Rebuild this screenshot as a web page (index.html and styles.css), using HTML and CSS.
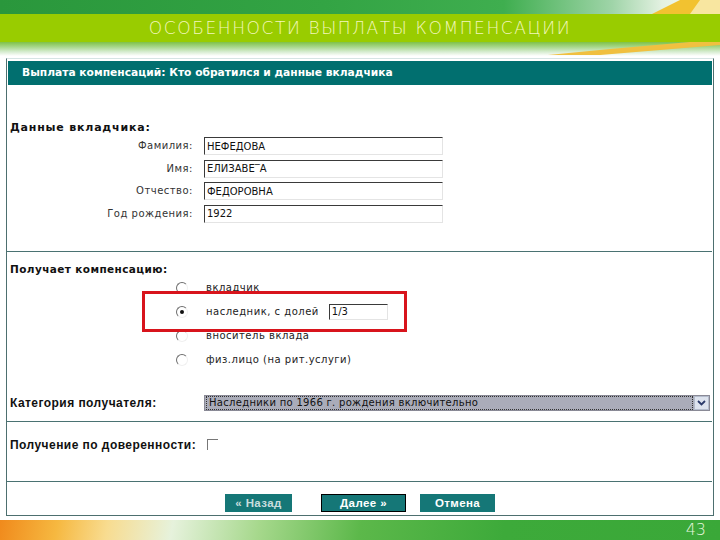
FILE: index.html
```html
<!DOCTYPE html>
<html lang="ru">
<head>
    <meta charset="UTF-8">
    <title>Особенности выплаты компенсации</title>
    <link rel="stylesheet" href="styles.css">
</head>
<body>
    <header class="banner">
        <div class="stripe-top"></div>
        <h1 class="banner-title">ОСОБЕННОСТИ ВЫПЛАТЫ КОМПЕНСАЦИИ</h1>
        <div class="stripe-bottom"></div>
        <svg class="swoosh" viewBox="0 0 720 56" width="720" height="56">
            <polygon points="652,14 680,0 720,0 720,14" fill="#f2c230"/>
            <polygon points="700,0 720,0 720,14 690,14" fill="#f8e6a0"/>
            <polygon points="548,55 610,49 690,42 720,42 720,45 660,50 600,55" fill="#f0c040"/>
        </svg>
    </header>

    <div class="window">
        <div class="window-title">Выплата компенсаций: Кто обратился и данные вкладчика</div>

        <div class="section depositor">
            <div class="heading">Данные вкладчика:</div>
            <div class="fields">
                <label>Фамилия:</label>
                <input class="field" type="text" value="НЕФЕДОВА">
                <label>Имя:</label>
                <input class="field" type="text" value="ЕЛИЗАВЕ&#8254;А">
                <label>Отчество:</label>
                <input class="field" type="text" value="ФЕДОРОВНА">
                <label>Год рождения:</label>
                <input class="field" type="text" value="1922">
            </div>
        </div>

        <div class="section recipient">
            <div class="heading">Получает компенсацию:</div>
            <ul class="choices">
                <li><span class="radio"></span>вкладчик</li>
                <li><span class="radio on"></span>наследник, с долей <input class="share" type="text" value="1/3"></li>
                <li><span class="radio"></span>вноситель вклада</li>
                <li><span class="radio"></span>физ.лицо (на рит.услуги)</li>
            </ul>
            <div class="category">
                <div class="heading2">Категория получателя:</div>
                <div class="select">
                    <span class="select-text">Наследники по 1966 г. рождения включительно</span>
                    <span class="select-arrow">
                        <svg width="9" height="6" viewBox="0 0 9 6"><path d="M1 1l3.5 3.5L8 1" fill="none" stroke="#2b3a6a" stroke-width="1.8"/></svg>
                    </span>
                </div>
            </div>
            <div class="highlight"></div>
        </div>

        <div class="section proxy">
            <div class="heading2">Получение по доверенности:</div>
            <span class="check"></span>
        </div>

        <div class="buttons">
            <div class="btn back">&laquo; Назад</div>
            <div class="btn next">Далее &raquo;</div>
            <div class="btn cancel">Отмена</div>
        </div>
    </div>

    <footer class="footer">
        <span class="page-num">43</span>
    </footer>
</body>
</html>
```

FILE: styles.css
```css
*{
    margin:0;
    padding:0;
    box-sizing:border-box;
    list-style:none;
}
body{
    width:720px;
    height:540px;
    overflow:hidden;
    background:#fff;
    font-family:"DejaVu Sans", sans-serif;
    font-size:10px;
    color:#222;
}

/* banner */
.banner{
    position:relative;
    height:56px;
}
.stripe-top{
    height:14px;
    background:linear-gradient(90deg, #2a973c 0%, #33a444 45%, #3fae4f 70%, #9fd4a8 85%, #e4f1e2 92%, #fff 100%);
}
.banner-title{
    height:28px;
    background:#99cc00;
    text-align:center;
    font-family:"DejaVu Sans", sans-serif;
    font-weight:200;
    font-size:17px;
    line-height:28px;
    color:#f3f7bc;
    letter-spacing:1.6px;
}
.stripe-bottom{
    height:14px;
    background:linear-gradient(180deg, #7fc147 0%, #a7d78a 35%, #d6ecd0 70%, #fff 100%);
}
.swoosh{
    position:absolute;
    top:0;
    left:0;
    pointer-events:none;
}

/* window */
.window{
    margin:2px 6px 0;
    border:1px solid #4d6f6f;
    border-top-color:#d6e4e4;
    background:#fff;
}
.window-title{
    margin:2px 1px 0;
    height:24px;
    padding-left:14px;
    background:#016f6f;
    color:#fff;
    font-family:"DejaVu Sans", sans-serif;
    font-weight:bold;
    font-size:10.7px;
    line-height:24px;
}
.section{
    position:relative;
    margin-right:1px;
    padding:0 2px 0 3px;
    border-bottom:1px solid #4a7272;
}
.heading{
    font-weight:bold;
    font-size:10.5px;
    line-height:14px;
    letter-spacing:0.4px;
    color:#111;
}
.heading2{
    font-family:"Liberation Sans", sans-serif;
    font-weight:bold;
    font-size:12px;
    line-height:14px;
    letter-spacing:0.45px;
    white-space:nowrap;
    color:#111;
}

/* depositor */
.depositor{
    padding-top:36px;
    padding-bottom:28px;
}
.depositor .heading{
    margin-bottom:2px;
    font-size:11px;
    letter-spacing:0.8px;
}
.fields{
    display:grid;
    grid-template-columns:183px 239px;
    column-gap:11px;
    row-gap:4.5px;
}
.fields label{
    text-align:right;
    line-height:18px;
    letter-spacing:0.5px;
    color:#333;
}
.field{
    height:18px;
    padding-left:2px;
    border:1px solid;
    border-color:#3a3a3a #e4e4e4 #e4e4e4 #3a3a3a;
    font-family:"DejaVu Sans", sans-serif;
    font-size:10px;
    color:#111;
    background:#fff;
}

/* recipient */
.recipient{
    padding-top:11px;
    padding-bottom:10px;
}
.recipient .heading{
    line-height:13px;
}
.choices li{
    display:flex;
    align-items:center;
    height:24px;
    padding-left:166px;
    letter-spacing:0.5px;
    color:#222;
}
.radio{
    width:12px;
    height:12px;
    margin-right:18px;
    border-radius:50%;
    border:1.5px solid;
    border-color:#6e6e6e #f0f0f0 #f0f0f0 #6e6e6e;
    display:flex;
    align-items:center;
    justify-content:center;
}
.radio.on::after{
    content:"";
    width:4px;
    height:4px;
    border-radius:50%;
    background:#111;
}
.share{
    width:59px;
    height:16px;
    margin-left:10px;
    padding-left:2px;
    border:1px solid;
    border-color:#3a3a3a #e4e4e4 #e4e4e4 #3a3a3a;
    font-family:"DejaVu Sans", sans-serif;
    font-size:10px;
    color:#111;
}
.category{
    display:grid;
    grid-template-columns:183px 1fr;
    column-gap:11px;
    align-items:center;
    margin-top:23px;
}
.select{
    display:flex;
    align-items:center;
    height:16px;
    border:1px solid #8a8a96;
    background:#aaacb9;
}
.select-text{
    flex:1;
    height:14px;
    margin:0 1px;
    padding-left:2px;
    border:1px dotted #333;
    font-size:10px;
    line-height:12px;
    letter-spacing:0.3px;
    color:#111;
}
.select-arrow{
    width:15px;
    height:14px;
    display:flex;
    align-items:center;
    justify-content:center;
    background:#dde3ee;
    border:1px solid #b4bccc;
}
.highlight{
    position:absolute;
    left:135px;
    top:39px;
    width:265px;
    height:41px;
    border:3px solid #d8141c;
}

/* proxy */
.proxy{
    display:grid;
    grid-template-columns:183px 1fr;
    column-gap:11px;
    align-items:center;
    padding-top:16px;
    padding-bottom:29px;
}
.check{
    width:11px;
    height:11px;
    margin-left:3px;
    border-top:1.5px solid #777;
    border-left:1.5px solid #777;
}

/* buttons */
.buttons{
    display:flex;
    justify-content:center;
    padding:12px 0 3px;
}
.btn{
    height:18px;
    background:#157777;
    color:#fff;
    text-align:center;
    font-family:"Liberation Sans", sans-serif;
    font-weight:bold;
    font-size:11.5px;
    line-height:18px;
    letter-spacing:0.4px;
}
.back{
    width:67px;
    color:#c9dede;
}
.next{
    width:85px;
    margin:0 14px 0 29px;
    border:1px solid #000;
    line-height:16px;
}
.cancel{
    width:75px;
}

/* footer */
.footer{
    display:flex;
    justify-content:flex-end;
    align-items:center;
    height:20px;
    margin-top:4px;
    padding-right:14px;
    background:linear-gradient(100deg, #f08a1c 0%, #f6b840 8%, #f8dc90 15%, #e6f2dc 24%, #a6d88c 36%, #5cb84a 50%, #3daa3a 70%, #3aa838 100%);
}
.page-num{
    font-family:"DejaVu Sans", sans-serif;
    font-weight:200;
    font-size:16px;
    color:#e6f6de;
}
```
